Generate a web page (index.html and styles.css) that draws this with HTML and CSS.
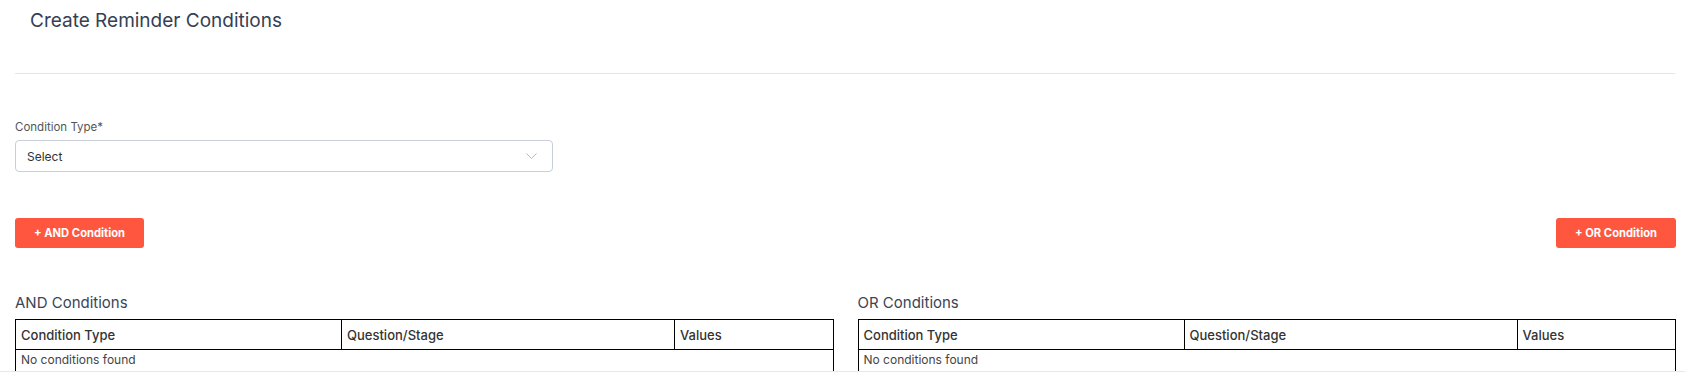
FILE: index.html
```html
<!DOCTYPE html>
<html lang="en">
<head>
  <meta charset="UTF-8">
  <meta name="viewport" content="width=device-width, initial-scale=1.0">
  <title>Create Reminder Conditions</title>
  <link rel="stylesheet" href="styles.css">
</head>
<body>
  <div class="page">
    <h2 class="page-title">Create Reminder Conditions</h2>
    <hr class="divider">

    <!-- Condition type -->
    <div class="form-group">
      <label class="field-label">Condition Type*</label>
      <div class="select-box">
        <span>Select</span>
        <svg class="chevron" width="11" height="6" viewBox="0 0 11 6">
          <polyline points="0.5,0.5 5.5,5.5 10.5,0.5" fill="none" stroke="#b4bac4" stroke-width="1"/>
        </svg>
      </div>
    </div>

    <div class="actions">
      <button class="btn-add">+ AND Condition</button>
      <button class="btn-add">+ OR Condition</button>
    </div>

    <div class="tables">
      <div class="condition-block">
        <h4 class="block-title">AND Conditions</h4>
        <table class="cond-table">
          <thead>
            <tr>
              <th class="col-type">Condition Type</th>
              <th class="col-question">Question/Stage</th>
              <th>Values</th>
            </tr>
          </thead>
          <tbody>
            <tr><td colspan="3">No conditions found</td></tr>
          </tbody>
        </table>
      </div>
      <div class="condition-block">
        <h4 class="block-title">OR Conditions</h4>
        <table class="cond-table">
          <thead>
            <tr>
              <th class="col-type">Condition Type</th>
              <th class="col-question">Question/Stage</th>
              <th>Values</th>
            </tr>
          </thead>
          <tbody>
            <tr><td colspan="3">No conditions found</td></tr>
          </tbody>
        </table>
      </div>
    </div>
  </div>
</body>
</html>
```

FILE: styles.css
```css
body {
  margin: 0;
  background-color: white;
  font-family: Inter, "Noto Sans", sans-serif;
  color: #333;
}

.page {
  width: 1685px;
  height: 372px;
  box-sizing: border-box;
  padding: 0 9px 0 15px;
  border-bottom: 1px solid #e6e8f0;
  overflow: hidden;
}

.page-title {
  margin: 0;
  padding: 7px 0 0 15px;
  font-size: 19px;
  line-height: 28px;
  font-weight: 400;
  color: #344054;
}

.divider {
  border: 0;
  border-top: 1px solid #e2e5ea;
  margin: 38px 1px 0 0;
}

.form-group {
  margin-top: 46px;
}

.field-label {
  display: block;
  font-size: 11.5px;
  line-height: 14px;
  color: #555;
  margin-bottom: 6px;
}

.select-box {
  width: 538px;
  height: 32px;
  box-sizing: border-box;
  border: 1px solid #c8cfda;
  border-radius: 4px;
  display: flex;
  align-items: center;
  justify-content: space-between;
  padding: 0 15px 0 11px;
  font-size: 12px;
  color: #333;
}

.actions {
  margin-top: 46px;
  display: flex;
  justify-content: space-between;
}

.btn-add {
  height: 30px;
  border: none;
  border-radius: 3px;
  background-color: #ff5640;
  color: white;
  font-family: Inter, sans-serif;
  font-size: 11.2px;
  font-weight: 700;
  padding: 0 19px;
  cursor: pointer;
}

.tables {
  margin-top: 45px;
  display: flex;
  gap: 24px;
}

.condition-block {
  flex: 1;
}

.block-title {
  margin: 0 0 6px;
  font-size: 15px;
  line-height: 20px;
  font-weight: 400;
  color: #3a4556;
}

.cond-table {
  width: 100%;
  border-collapse: collapse;
  table-layout: fixed;
}

.cond-table th,
.cond-table td {
  border: 1px solid black;
  text-align: left;
  padding: 0 5px;
}

.cond-table th {
  height: 29px;
  font-size: 13px;
  font-weight: 500;
  color: #333;
}

.cond-table td {
  height: 24px;
  padding-top: 2px;
  vertical-align: top;
  font-size: 12px;
  line-height: 15px;
  color: #444;
}

.col-type { width: 315px; }
.col-question { width: 322px; }
```
